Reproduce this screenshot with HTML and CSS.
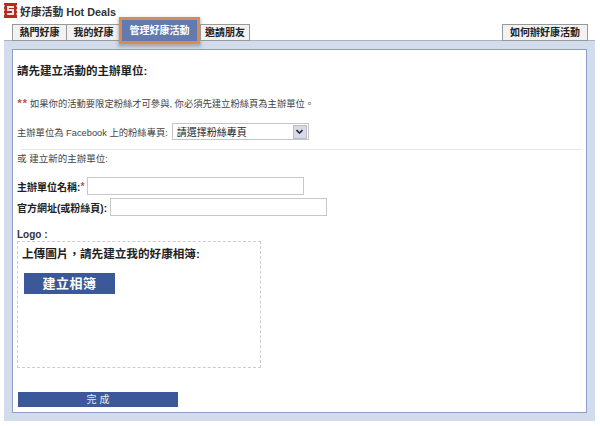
FILE: index.html
```html
<!DOCTYPE html>
<html lang="zh-Hant">
<head>
<meta charset="utf-8">
<title>好康活動 Hot Deals</title>
<link rel="stylesheet" href="styles.css">
</head>
<body>
<header class="title">
  <svg class="logo" width="13" height="15" viewBox="0 0 13 15"><rect width="13" height="15" fill="#b32a22"/><path d="M0 3h1M0 7h1M0 11h1M12 3h1M12 7h1M12 11h1" stroke="#fff" stroke-width="1"/><path d="M10 4H4v3h5v4H3" fill="none" stroke="#f6e3df" stroke-width="2"/></svg>
  <span>好康活動 Hot Deals</span>
</header>
<nav class="tabs">
  <a class="tab">熱門好康</a>
  <a class="tab">我的好康</a>
  <a class="tab active">管理好康活動</a>
  <a class="tab">邀請朋友</a>
  <a class="tab howto">如何辦好康活動</a>
</nav>
<div class="panel">
  <main class="box">
    <h1>請先建立活動的主辦單位:</h1>
    <p class="note"><span class="stars">**</span>如果你的活動要限定粉絲才可參與, 你必須先建立粉絲頁為主辦單位。</p>
    <div class="fanrow">
      <span>主辦單位為 Facebook 上的粉絲專頁:</span>
      <span class="select"><span class="sel-text">請選擇粉絲專頁</span><span class="sel-btn"><svg width="7" height="5" viewBox="0 0 7 5"><path d="M.5 1l3 3 3-3" fill="none" stroke="#222a40" stroke-width="1.6"/></svg></span></span>
    </div>
    <hr>
    <p class="or">或 建立新的主辦單位:</p>
    <div class="field first"><b>主辦單位名稱:</b><span class="star">*</span><span class="input"></span></div>
    <div class="field"><b>官方網址(或粉絲頁):</b><span class="input url"></span></div>
    <div class="logolabel">Logo :</div>
    <div class="upload">
      <div class="uptitle">上傳圖片，請先建立我的好康相簿:</div>
      <a class="album">建立相簿</a>
    </div>
    <a class="done">完 成</a>
  </main>
</div>
</body>
</html>
```
FILE: styles.css
```css
* { box-sizing: border-box; }
html, body { margin: 0; padding: 0; background: #fff; }
body {
  width: 600px; height: 426px; overflow: hidden;
  font-family: "Liberation Sans", "Noto Sans CJK TC", sans-serif;
  font-size: 10px; color: #333;
}
.title {
  display: flex; align-items: center; gap: 3px;
  height: 24px; padding: 0 0 3px 4px;
  font-size: 10.8px; font-weight: bold; color: #333;
}
.logo { flex: none; }
.tabs {
  display: flex; align-items: flex-start; height: 16px; padding: 0 12px;
  position: relative; z-index: 1;
}
.tab {
  flex: none; height: 17px; margin-right: -1px;
  border: 1px solid #999;
  background: #f2f2f2; color: #222; white-space: nowrap;
  font-size: 10px; font-weight: bold; line-height: 15px; text-align: center;
}
.tab:nth-child(1), .tab:nth-child(2) { width: 55px; }
.tab.active {
  width: 75px; height: 21px; margin: -4px 3px 0 2px; line-height: 21px;
  background: #627aad; color: #fff; border: 0;
  outline: 3px solid #d98a55;
  box-shadow: 0 2px 3px 4px rgba(120,110,100,.45);
}
.tab:nth-child(4) { width: 50px; }
.tab.howto { margin: 0 0 0 auto; width: 86px; }
.panel {
  margin: 0 5px 0 4px; height: 381px;
  padding: 8px;
  background: #d3dcec; border-top: 1px solid #aab2bb;
}
.box {
  height: 100%; padding: 13px 4px 0;
  background: #fff; border: 1px solid #8d9fc5;
}
h1 { margin: 0; font-size: 11.5px; line-height: 16px; color: #222; font-weight: bold; }
.note { margin: 18px 0 0; line-height: 14px; font-size: 9.3px; color: #444; }
.stars { display: inline-block; width: 13px; color: #c8484c; font-style: italic; font-weight: bold; font-size: 11px; letter-spacing: 1px; line-height: 10px; }
.fanrow { display: flex; align-items: center; gap: 4px; margin-top: 12px; height: 17px; font-size: 9.3px; color: #444; }
.select {
  display: flex; align-items: center; justify-content: space-between;
  width: 137px; height: 17px; padding: 0 1px 0 4px;
  border: 1px solid #c4c4c4; font-size: 10px; color: #222;
}
.sel-btn {
  display: flex; align-items: center; justify-content: center;
  width: 14px; height: 14px; border: 1px solid #b8bcc8; background: #d8dbe6;
}
hr { margin: 9px 0 0 4px; height: 1px; border: 0; background: #e6e6e6; }
.or { margin: 2px 0 0; line-height: 14px; font-size: 9.5px; color: #444; }
.field { display: flex; align-items: center; height: 18px; margin-top: 3px; font-size: 10px; color: #222; }
.field.first { margin-top: 11px; }
.star { width: 6px; color: #c8484c; font-style: italic; font-weight: bold; }
.input { flex: none; width: 217px; height: 18px; margin-left: 1px; border: 1px solid #c8c8c8; background: #fff; }
.input.url { margin-left: 3px; }
.logolabel { margin-top: 13px; font-size: 10px; font-weight: bold; line-height: 12px; color: #333; }
.upload {
  width: 244px; height: 127px; padding: 4px;
  border: 1px dashed #ccc;
}
.uptitle { font-size: 11.6px; font-weight: bold; line-height: 15px; color: #222; white-space: nowrap; }
.album {
  display: block; width: 91px; height: 21px; margin: 12px 0 0 2px;
  background: #3b5998; color: #fff; text-align: center;
  font-size: 13px; line-height: 21px; font-weight: bold; letter-spacing: .5px;
}
.done {
  display: block; width: 160px; height: 15px; margin: 24px 0 0 1px;
  background: #3b5998; color: #e8ecf4; text-align: center;
  font-size: 10px; line-height: 15px;
}
```
